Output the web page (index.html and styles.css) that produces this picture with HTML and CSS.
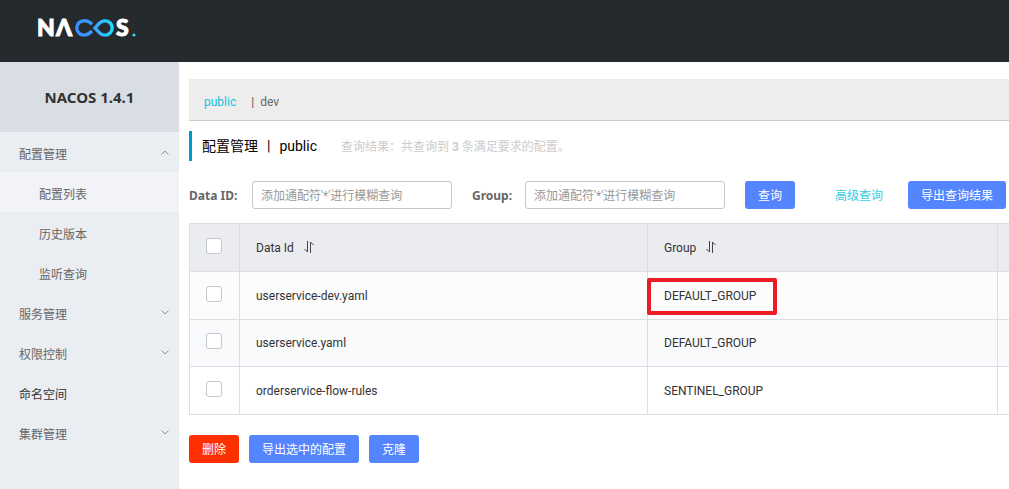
FILE: index.html
```html
<!DOCTYPE html>
<html lang="zh-CN">
<head>
<meta charset="utf-8">
<meta name="viewport" content="width=device-width, initial-scale=1">
<title>Nacos</title>
<link rel="stylesheet" href="styles.css">
</head>
<body>
<header class="topbar">
  <a class="brand" href="#" aria-label="NACOS">
    <svg class="brand-logo" width="104" height="40" viewBox="-2 -8 104 40" aria-hidden="true">
      <defs>
        <linearGradient id="loop" gradientUnits="userSpaceOnUse" x1="37" y1="0" x2="76" y2="0">
          <stop offset="0" stop-color="#3f8cff"/>
          <stop offset="0.45" stop-color="#399fff"/>
          <stop offset="1" stop-color="#1fe3f5"/>
        </linearGradient>
      </defs>
      <text class="brand-text" x="-2" y="20">N</text>
      <text class="brand-text" x="17" y="20">Λ</text>
      <text class="brand-text" x="77" y="20">S</text>
      <circle cx="95" cy="19" r="1.600" fill="#2fd8ec"/>
      <path d="M53 8.200L51 6.500C49.300 5.200 47 4.700 45 4.700A7.200 7.200 0 0 0 45 19.100C47.500 19.100 49.500 18.300 51 16.800L53 15M56 11.900L60.500 7C62.500 5.300 64 4.700 66 4.700A7.200 7.200 0 0 1 66 19.100C64 19.100 62 18.400 60.500 16.800Z" fill="none" stroke="url(#loop)" stroke-width="3.400"/>
    </svg>
  </a>
</header>
<div class="layout">
  <aside class="sidebar">
    <h1 class="version">NACOS 1.4.1</h1>
    <nav class="menu">
      <button class="menu-item" type="button" aria-expanded="true">配置管理
        <svg class="chevron" width="8" height="5" viewBox="0 0 8 5" aria-hidden="true"><path d="M.5 4.500L4 1L7.500 4.500"/></svg>
      </button>
      <a class="menu-item menu-sub menu-active" href="#">配置列表</a>
      <a class="menu-item menu-sub" href="#">历史版本</a>
      <a class="menu-item menu-sub" href="#">监听查询</a>
      <button class="menu-item" type="button" aria-expanded="false">服务管理
        <svg class="chevron" width="8" height="5" viewBox="0 0 8 5" aria-hidden="true"><path d="M.5 .5L4 4L7.500 .5"/></svg>
      </button>
      <button class="menu-item" type="button" aria-expanded="false">权限控制
        <svg class="chevron" width="8" height="5" viewBox="0 0 8 5" aria-hidden="true"><path d="M.5 .5L4 4L7.500 .5"/></svg>
      </button>
      <a class="menu-item menu-link" href="#">命名空间</a>
      <button class="menu-item" type="button" aria-expanded="false">集群管理
        <svg class="chevron" width="8" height="5" viewBox="0 0 8 5" aria-hidden="true"><path d="M.5 .5L4 4L7.500 .5"/></svg>
      </button>
    </nav>
  </aside>
  <main class="content">
    <div class="namespaces">
      <a class="namespace namespace-current" href="#">public</a>
      <span class="separator">|</span>
      <a class="namespace" href="#">dev</a>
    </div>
    <div class="heading">
      <h2 class="heading-title"><span>配置管理</span><span>|</span><span>public</span></h2>
      <p class="heading-note">查询结果：共查询到 <strong>3</strong> 条满足要求的配置。</p>
    </div>
    <form class="search">
      <label class="search-label" for="data-id">Data ID:</label>
      <input class="search-input" id="data-id" type="text" placeholder="添加通配符'*'进行模糊查询">
      <label class="search-label search-label-group" for="group">Group:</label>
      <input class="search-input" id="group" type="text" placeholder="添加通配符'*'进行模糊查询">
      <button class="button search-submit" type="button">查询</button>
      <a class="advanced" href="#">高级查询</a>
      <button class="button" type="button">导出查询结果</button>
    </form>
    <table class="configs">
      <colgroup><col class="col-check"><col class="col-id"><col class="col-group"><col></colgroup>
      <thead>
        <tr>
          <th class="cell-check"><input class="check" type="checkbox" aria-label="全选"></th>
          <th>Data Id <svg class="sort" width="12" height="12" viewBox="0 0 12 12" aria-hidden="true"><path d="M4.500 0V11L1.500 8M7.500 12V1L10.500 4"/></svg></th>
          <th>Group <svg class="sort" width="12" height="12" viewBox="0 0 12 12" aria-hidden="true"><path d="M4.500 0V11L1.500 8M7.500 12V1L10.500 4"/></svg></th>
          <th></th>
        </tr>
      </thead>
      <tbody>
        <tr class="row-hover">
          <td class="cell-check"><input class="check" type="checkbox" aria-label="userservice-dev.yaml"></td>
          <td>userservice-dev.yaml</td>
          <td class="cell-marked">DEFAULT_GROUP<span class="marker"></span></td>
          <td></td>
        </tr>
        <tr class="row-stripe">
          <td class="cell-check"><input class="check" type="checkbox" aria-label="userservice.yaml"></td>
          <td>userservice.yaml</td>
          <td>DEFAULT_GROUP</td>
          <td></td>
        </tr>
        <tr>
          <td class="cell-check"><input class="check" type="checkbox" aria-label="orderservice-flow-rules"></td>
          <td>orderservice-flow-rules</td>
          <td>SENTINEL_GROUP</td>
          <td></td>
        </tr>
      </tbody>
    </table>
    <div class="actions">
      <button class="button button-danger" type="button">删除</button>
      <button class="button" type="button">导出选中的配置</button>
      <button class="button" type="button">克隆</button>
    </div>
  </main>
</div>
</body>
</html>
```

FILE: styles.css
```css
* {
  box-sizing: border-box;
}

body {
  margin: 0;
  min-height: 100vh;
  display: flex;
  flex-direction: column;
  overflow-x: hidden;
  background: #fff;
  color: #333;
  font: 12px/18px Roboto, "Noto Sans CJK SC", sans-serif;
}

button,
input {
  font: inherit;
}

a {
  color: inherit;
  text-decoration: none;
}

.topbar {
  height: 62px;
  padding: 8px 37px;
  background: #252a2f;
}

.brand,
.brand-logo {
  display: block;
}

.brand {
  width: 104px;
}

.brand-text {
  fill: #fff;
  stroke: #fff;
  font: 900 23px Lato, sans-serif;
}

.layout {
  flex: 1;
  display: flex;
}

.sidebar {
  flex: 0 0 179px;
  background: #eaedf2;
}

.version {
  margin: 0;
  height: 70px;
  background: #d9dde4;
  font: 700 15px/70px "Noto Sans", sans-serif;
  text-align: center;
}

.menu-item {
  display: flex;
  align-items: center;
  justify-content: space-between;
  width: 100%;
  height: 40px;
  padding: 6px 10px 0 19px;
  border: 0;
  background: none;
  color: #666;
  text-align: left;
}

.menu-sub {
  padding-left: 39px;
}

.menu-active {
  background: #f1f3f7;
}

.menu-link {
  color: #333;
}

.chevron {
  margin-bottom: 6px;
  fill: none;
  stroke: #888e99;
}

.content {
  flex: 1;
  min-width: 0;
  padding: 17px 0 0 10px;
}

.namespaces {
  display: flex;
  align-items: center;
  height: 42px;
  padding: 4px 15px 0;
  border-bottom: 1px solid #ccc;
  background: #ededed;
  color: #666;
}

.namespace-current {
  color: #1cc2dc;
}

.separator {
  margin: 0 6px 0 15px;
  color: #555;
}

.heading {
  display: flex;
  align-items: center;
  gap: 24px;
  height: 30px;
  margin: 10px 0 20px;
  padding-left: 10px;
  border-left: 3px solid #09c;
}

.heading-title {
  display: flex;
  gap: 9px;
  margin: 0;
  color: #000;
  font-size: 14px;
  font-weight: 400;
}

.heading-note {
  margin: 0;
  padding-top: 2px;
  color: #ccc;
}

.search {
  display: flex;
  align-items: center;
  margin-bottom: 14px;
  white-space: nowrap;
}

.search-label {
  flex: 0 0 63px;
  padding-top: 2px;
  color: #666;
  font-family: "Noto Sans", sans-serif;
  font-weight: 700;
}

.search-label-group {
  flex-basis: 53px;
  margin-left: 20px;
}

.search-input {
  width: 200px;
  height: 28px;
  padding: 2px 8px 0;
  border: 1px solid #c4c6cf;
  border-radius: 3px;
  background: #fff;
  color: #333;
}

.search-input::placeholder {
  color: #999;
}

.button {
  flex: none;
  height: 28px;
  padding: 2px 13px 0;
  border: 0;
  border-radius: 3px;
  background: #5584ff;
  color: #fff;
}

.search-submit {
  margin-left: 20px;
}

.advanced {
  margin: 0 25px 0 40px;
  padding-top: 2px;
  color: #33cde5;
}

.button-danger {
  background: #ff3000;
}

.configs {
  width: 100%;
  border-collapse: collapse;
  table-layout: fixed;
}

.col-check {
  width: 50px;
}

.col-id {
  width: 408px;
}

.col-group {
  width: 350px;
}

.configs th,
.configs td {
  height: 48px;
  padding: 0 16px;
  border: 1px solid #dcdee3;
  font-weight: 400;
  text-align: left;
}

.configs th {
  background: #ebecf0;
}

.configs th:last-child,
.configs td:last-child {
  padding: 0;
  border-right: 0;
}

.row-hover td {
  background: #fcfcfc;
}

.configs .row-stripe td {
  height: 47px;
  background: #f9fafc;
}

.check {
  display: block;
  width: 16px;
  height: 16px;
  margin: 0 0 4px;
  appearance: none;
  border: 1px solid #c4c6cf;
  border-radius: 3px;
  background: #fff;
}

.sort {
  margin-left: 6px;
  vertical-align: -1px;
  fill: none;
  stroke: #444;
}

.cell-marked {
  position: relative;
}

.marker {
  position: absolute;
  top: 6px;
  left: -1px;
  width: 130px;
  height: 37px;
  border: 4px solid #ed1c24;
  border-radius: 2px;
}

.actions {
  display: flex;
  gap: 10px;
  padding: 20px 0;
}
```
